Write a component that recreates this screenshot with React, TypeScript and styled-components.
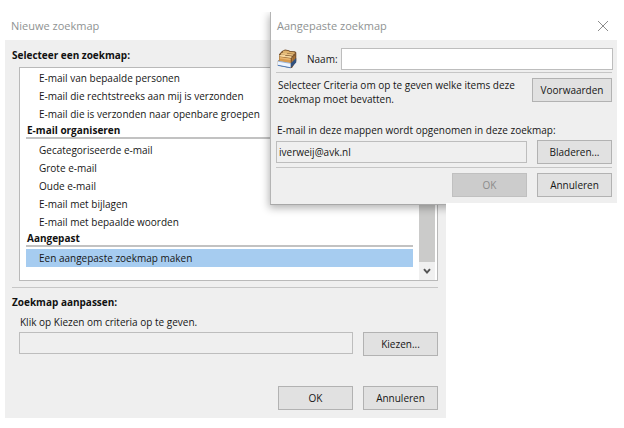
import React from "react";
import styled, { createGlobalStyle, css } from "styled-components";

const GlobalStyle = createGlobalStyle`
  * { box-sizing: border-box; }
  body {
    margin: 0;
    background: #fff;
    color: #161616;
    font: 10px/14px "Open Sans", "Noto Sans", sans-serif;
  }
  h1, h2, h3, p, ul { margin: 0; padding: 0; font-size: inherit; }
  ul { list-style: none; }
  button, input { font: inherit; color: inherit; }
`;

const Desktop = styled.main`
  position: relative;
  padding: 12px 7px 10px 5px;
`;

const MainDialog = styled.section`
  margin-right: 171px;
  background: #efefef;
`;

const FrontDialog = styled.section`
  position: absolute;
  top: 12px;
  left: 270px;
  right: 7px;
  background: #efefef;
  border-left: 1px solid #b4b4b4;
  border-bottom: 1px solid #a8a8a8;
  box-shadow: -1px 3px 8px rgba(0, 0, 0, 0.3);
  clip-path: polygon(
    -12px 0,
    100% 0,
    100% calc(100% - 2px),
    calc(100% - 171px) calc(100% - 2px),
    calc(100% - 171px) calc(100% + 14px),
    -12px calc(100% + 14px)
  );
`;

const TitleBar = styled.header`
  display: flex;
  align-items: center;
  justify-content: space-between;
  height: 28px;
  padding: 0 8px 0 6px;
  background: #fff;
  color: #8f9393;
  font-size: 11px;

  h1 { font-weight: 400; }
`;

const CloseButton = styled.button`
  display: flex;
  padding: 0;
  border: 0;
  background: none;
  color: #8c8c8c;
`;

const MainBody = styled.div`
  padding: 8px 8px 8px 7px;
`;

const Heading = styled.h2`
  font-weight: 700;
  color: #111;
`;

const ListBox = styled.div`
  display: flex;
  margin: 5px 0 0 7px;
  border: 1px solid #b9b9b9;
  background: #fff;
`;

const Groups = styled.div`
  flex: 1;
  padding: 1px 6px 13px;
`;

const GroupTitle = styled.h3`
  height: 16px;
  margin-bottom: 2px;
  padding-left: 1px;
  border-bottom: 2px solid #c2c2c2;
  line-height: 14px;
  color: #111;
`;

const Item = styled.li<{ $selected?: boolean }>`
  padding-left: 13px;
  line-height: 18px;
  white-space: nowrap;
  background: ${(p) => (p.$selected ? "#a6ccf0" : "transparent")};
`;

const ScrollBar = styled.div`
  display: flex;
  flex-direction: column;
  width: 16px;
  margin-right: 2px;
  background: #f0f0f0;
`;

const Thumb = styled.div`
  flex: 1;
  background: #cbcbca;
`;

const ScrollButton = styled.button`
  display: flex;
  align-items: center;
  justify-content: center;
  height: 18px;
  padding: 0;
  border: 0;
  background: #f0f0f0;
  color: #555;
`;

const Separator = styled.hr<{ $space?: string }>`
  height: 1px;
  margin: ${(p) => p.$space || "0"};
  border: 0;
  background: #c6c6c6;
`;

const Row = styled.div<{ $end?: boolean; $top?: boolean }>`
  display: flex;
  align-items: ${(p) => (p.$top ? "flex-start" : "center")};
  justify-content: ${(p) => (p.$end ? "flex-end" : "space-between")};
  gap: 10px;
`;

const Button = styled.button<{ $wide?: boolean }>`
  flex: none;
  width: ${(p) => (p.$wide ? 80 : 75)}px;
  height: 24px;
  padding: 0;
  border: 1px solid #b2b2b2;
  background: #e1e1e1;

  &:disabled {
    border-color: #c0c0c0;
    background: #cccccc;
    color: #8b8b8b;
  }
`;

const field = css`
  flex: 1;
  min-width: 0;
  height: 22px;
  padding: 0 2px;
  border: 1px solid #bdbdbd;
  border-radius: 0;
  outline: 0;
`;

const TextInput = styled.input`
  ${field}
  background: #fff;
`;

const ReadOnlyInput = styled.input`
  ${field}
  background: #efefef;
`;

const Hint = styled.label`
  display: block;
  margin: 6px 0 3px 8px;
`;

const CustomField = styled.div`
  padding-left: 7px;
  margin-bottom: 30px;
`;

const FrontBody = styled.div`
  padding: 8px 4px 7px 5px;
`;

const NameRow = styled.div`
  display: flex;
  align-items: center;
  padding-left: 1px;

  label { margin: 0 3px 0 10px; }
`;

const Indented = styled.div`
  padding-right: 1px;
`;

const CriteriaText = styled.p`
  padding-left: 2px;
  white-space: nowrap;
`;

const FolderLabel = styled.label`
  display: block;
  margin: 17px 0 3px 1px;
  white-space: nowrap;
`;

const FolderIcon = () => (
  <svg width="20" height="20" viewBox="0 0 20 20" aria-hidden="true">
    <path d="M2 5.2 5 2l3-1.4 4 .6 1 .8 5 .3 1.3 1.2v8.7L15 19H13L.8 16.4V12L2 11z" fill="#7a5530" />
    <path d="M6 2.3 8 1.4l3.4.6.9.8 4.9.4.9.8-1 .9L6 3.7z" fill="#dfb26d" />
    <path d="M4.2 4.2 6 3.4l3.6.6.9.8 5.6.4.5.6-1 1L4 5.5z" fill="#eac281" />
    <path d="M2.4 6.2 4.4 5.4l3.4.6.9.8 5.6.5.5.8-.8.8L2.3 7.6z" fill="#f6d59c" />
    <path d="M2.3 7.8l11.5 1.6-.1 5L2.2 12.6z" fill="#d59a50" />
    <path d="M2.8 8.2l10.6 1.5v1.2L2.8 9.4z" fill="#ebb873" />
    <path d="M14.6 9 18.6 5v6.6l-4 4z" fill="#8a5c2c" />
    <path d="M15.7 8.6v5.6M17.2 7.1v5.6" stroke="#c98f4b" strokeWidth=".7" />
    <path d="M.8 12 13.8 14.2v4.6L.8 16.3z" fill="#eef5ff" />
    <path d="M.8 12.2 13.8 14.4" stroke="#8fb1df" strokeWidth=".8" />
    <path d="M13.8 14.2 19.2 9v4.6l-5.4 5.2z" fill="#31517f" />
    <path d="M.8 16.3 13.8 18.8" fill="none" stroke="#4d7dbd" strokeWidth="1" />
  </svg>
);

const standardItems = [
  "E-mail van bepaalde personen",
  "E-mail die rechtstreeks aan mij is verzonden",
  "E-mail die is verzonden naar openbare groepen",
];

const organizeItems = [
  "Gecategoriseerde e-mail",
  "Grote e-mail",
  "Oude e-mail",
  "E-mail met bijlagen",
  "E-mail met bepaalde woorden",
];

const ItemList = ({ items }: { items: string[] }) => (
  <ul>
    {items.map((item) => (
      <Item key={item}>{item}</Item>
    ))}
  </ul>
);

export default function App() {
  return (
    <>
      <GlobalStyle />
      <Desktop>
        <MainDialog role="dialog" aria-labelledby="main-title">
          <TitleBar>
            <h1 id="main-title">Nieuwe zoekmap</h1>
          </TitleBar>
          <MainBody>
            <Heading>Selecteer een zoekmap:</Heading>
            <ListBox>
              <Groups>
                <ItemList items={standardItems} />
                <GroupTitle>E-mail organiseren</GroupTitle>
                <ItemList items={organizeItems} />
                <GroupTitle>Aangepast</GroupTitle>
                <ul>
                  <Item $selected>Een aangepaste zoekmap maken</Item>
                </ul>
              </Groups>
              <ScrollBar>
                <Thumb />
                <ScrollButton aria-label="Omlaag schuiven">
                  <svg width="8" height="7" viewBox="0 0 8 7" aria-hidden="true">
                    <path d="M1 1.2 4 4.6 7 1.2" fill="none" stroke="currentColor" strokeWidth="2" />
                  </svg>
                </ScrollButton>
              </ScrollBar>
            </ListBox>
            <Separator $space="6px 0 7px" />
            <Heading>Zoekmap aanpassen:</Heading>
            <Hint htmlFor="criteria">Klik op Kiezen om criteria op te geven.</Hint>
            <CustomField>
              <Row $top>
                <ReadOnlyInput id="criteria" readOnly />
                <Button>Kiezen...</Button>
              </Row>
            </CustomField>
            <Row $end>
              <Button>OK</Button>
              <Button>Annuleren</Button>
            </Row>
          </MainBody>
        </MainDialog>

        <FrontDialog role="dialog" aria-labelledby="front-title">
          <TitleBar>
            <h1 id="front-title">Aangepaste zoekmap</h1>
            <CloseButton aria-label="Sluiten">
              <svg width="12" height="12" viewBox="0 0 12 12" aria-hidden="true">
                <path d="M1 1 11 11M11 1 1 11" fill="none" stroke="currentColor" />
              </svg>
            </CloseButton>
          </TitleBar>
          <FrontBody>
            <NameRow>
              <FolderIcon />
              <label htmlFor="name">Naam:</label>
              <TextInput id="name" />
            </NameRow>
            <Indented>
              <Separator $space="2px 0 5px" />
              <Row $top>
                <CriteriaText>
                  Selecteer Criteria om op te geven welke items deze
                  <br />
                  zoekmap moet bevatten.
                </CriteriaText>
                <Button $wide>Voorwaarden</Button>
              </Row>
              <FolderLabel htmlFor="folder">
                E-mail in deze mappen wordt opgenomen in deze zoekmap:
              </FolderLabel>
              <Row>
                <ReadOnlyInput id="folder" readOnly value="iverweij@avk.nl" />
                <Button>Bladeren...</Button>
              </Row>
              <Separator $space="3px 0 5px" />
              <Row $end>
                <Button disabled>OK</Button>
                <Button>Annuleren</Button>
              </Row>
            </Indented>
          </FrontBody>
        </FrontDialog>
      </Desktop>
    </>
  );
}
